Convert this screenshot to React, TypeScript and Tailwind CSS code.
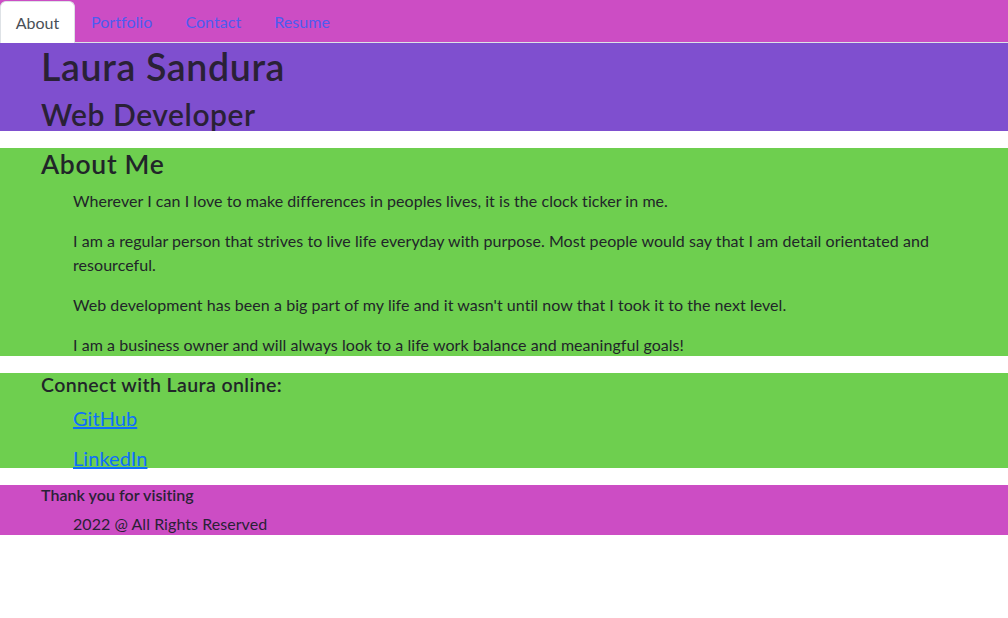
export default function App() {
  const font = { fontFamily: "Lato, 'Noto Sans', sans-serif" };
  return (
    <div className="min-h-[618px] bg-white text-[#212529] text-[16px] leading-[24px] tracking-[0.05px]" style={font}>
      <nav className="flex h-[43px] bg-[#cc4dc4] border-b border-[#dee2e6] pt-px">
        <a className="h-[42px] w-[75px] flex items-center justify-center bg-white rounded-t-[6px] border border-b-0 border-[#dee2e6] text-[#495057]">
          About
        </a>
        <a className="h-[42px] ml-[2px] px-[14px] flex items-center text-[#4c5cf0]">Portfolio</a>
        <a className="h-[42px] ml-[5px] px-[14px] flex items-center text-[#4c5cf0]">Contact</a>
        <a className="h-[42px] ml-[5px] px-[14px] flex items-center text-[#4c5cf0]">Resume</a>
      </nav>

      <header className="bg-[#7f4fcf] pl-[41px] pt-[2px] h-[88px] text-[#2a2136]">
        <h1 className="text-[37.5px] leading-[44px] font-semibold tracking-[0.65px] mb-[8px]">Laura Sandura</h1>
        <h2 className="text-[30px] leading-[34px] font-semibold tracking-[0.55px]">Web Developer</h2>
      </header>

      <section className="mt-[17px] bg-[#6ecf4f] pl-[41px] pr-[40px] h-[208px]">
        <h3 className="text-[26.5px] leading-[32px] font-semibold tracking-[0.7px] mb-[9px]">About Me</h3>
        <div className="pl-[32px] flex flex-col gap-[16px]">
          <p>Wherever I can I love to make differences in peoples lives, it is the clock ticker in me.</p>
          <p>
            I am a regular person that strives to live life everyday with purpose. Most people would say that I am
            detail orientated and resourceful.
          </p>
          <p>Web development has been a big part of my life and it wasn't until now that I took it to the next level.</p>
          <p>I am a business owner and will always look to a life work balance and meaningful goals!</p>
        </div>
      </section>

      <section className="mt-[17px] bg-[#6ecf4f] pl-[41px] h-[95px]">
        <h4 className="text-[19.5px] leading-[24px] font-semibold tracking-[0.4px] mb-[9px]">Connect with Laura online:</h4>
        <ul className="pl-[32px] flex flex-col gap-[16px] text-[20px] leading-[24px]">
          <li>
            <a className="text-[#0d6efd] underline">GitHub</a>
          </li>
          <li>
            <a className="text-[#0d6efd] underline">LinkedIn</a>
          </li>
        </ul>
      </section>

      <footer className="mt-[17px] bg-[#cc4dc4] pl-[41px] h-[50px] text-[#2a2136]">
        <h6 className="text-[16px] leading-[19px] font-semibold mb-[8px]">Thank you for visiting</h6>
        <p className="pl-[32px] leading-[23px]">2022 @ All Rights Reserved</p>
      </footer>
    </div>
  );
}
